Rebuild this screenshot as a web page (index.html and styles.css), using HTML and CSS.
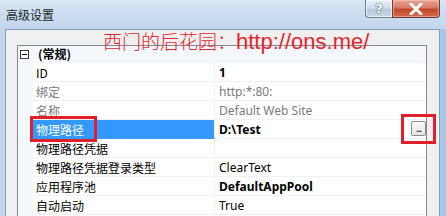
FILE: index.html
```html
<!DOCTYPE html>
<html lang="zh-CN">
<head>
<meta charset="utf-8">
<title>高级设置</title>
<link rel="stylesheet" href="styles.css">
</head>
<body>
<div class="window">
  <div class="titlebar">
    <span class="title">高级设置</span>
    <div class="caption-btns">
      <div class="btn-help">?</div>
      <div class="btn-close">
        <svg width="14" height="12" viewBox="0 0 14 12"><path d="M2 1 L12 11 M12 1 L2 11" stroke="#fff" stroke-width="3" stroke-linecap="round"/><path d="M2 1 L12 11 M12 1 L2 11" stroke="#fff" stroke-width="1.6"/></svg>
      </div>
    </div>
  </div>
  <div class="frame">
    <div class="client">
      <div class="grid">
        <div class="cat-row">
          <span class="toggle"></span>
          <span class="cat-name">(常规)</span>
        </div>
        <div class="row"><div class="gutter"></div><div class="name">ID</div><div class="value bold">1</div></div>
        <div class="row"><div class="gutter"></div><div class="name ro">绑定</div><div class="value ro">http:*:80:</div></div>
        <div class="row"><div class="gutter"></div><div class="name ro">名称</div><div class="value ro">Default Web Site</div></div>
        <div class="row"><div class="gutter"></div><div class="name sel">物理路径</div><div class="value bold">D:\Test<span class="ellipsis">...</span></div></div>
        <div class="row"><div class="gutter"></div><div class="name">物理路径凭据</div><div class="value"></div></div>
        <div class="row"><div class="gutter"></div><div class="name">物理路径凭据登录类型</div><div class="value">ClearText</div></div>
        <div class="row"><div class="gutter"></div><div class="name">应用程序池</div><div class="value bold">DefaultAppPool</div></div>
        <div class="row"><div class="gutter"></div><div class="name">自动启动</div><div class="value">True</div></div>
        <div class="row"><div class="gutter"></div><div class="name"></div><div class="value"></div></div>
      </div>
    </div>
  </div>
  <div class="watermark"><span class="wm-cjk">西门的后花园：</span><span class="wm-url">http://ons.me/</span></div>
  <div class="mark mark-name"></div>
  <div class="mark mark-btn"></div>
</div>
</body>
</html>
```
FILE: styles.css
```css
html, body {
  margin: 0;
  padding: 0;
}
body {
  width: 446px;
  height: 216px;
  overflow: hidden;
  font-family: "Noto Sans", "Noto Sans CJK SC", sans-serif;
  font-size: 12px;
  color: #000;
}
.window {
  position: relative;
  width: 446px;
  height: 216px;
  overflow: hidden;
  background: #c5d8ee;
}
.titlebar {
  height: 29px;
  display: flex;
  align-items: flex-start;
  justify-content: space-between;
  background: linear-gradient(to bottom, #dae7f5 0%, #cadcf0 50%, #c2d6ed 100%);
}
.title {
  margin: 7px 0 0 6px;
  font-family: "Noto Sans CJK SC", sans-serif;
  font-size: 12px;
  line-height: 16px;
  color: #1e1e1e;
}
.caption-btns {
  display: flex;
  margin-right: 6px;
}
.btn-help {
  width: 26px;
  height: 17px;
  border: 1px solid #6f7f94;
  border-top: none;
  border-right: none;
  border-radius: 0 0 0 4px;
  background: linear-gradient(to bottom, #e7eef7 0%, #d3dfec 45%, #b9c9dc 55%, #c9d7e7 100%);
  color: #fff;
  font-family: "DejaVu Sans", sans-serif;
  font-weight: bold;
  font-size: 13px;
  line-height: 17px;
  text-align: center;
  text-shadow: 0 0 2px #3c4f66, 0 0 1px #3c4f66;
  box-shadow: inset 0 0 0 1px rgba(255,255,255,0.6);
}
.btn-close {
  width: 46px;
  height: 17px;
  border: 1px solid #6d3a33;
  border-top: none;
  border-radius: 0 0 4px 0;
  background: linear-gradient(to bottom, #e8a696 0%, #d77a66 45%, #c2452c 55%, #d26a4a 100%);
  display: flex;
  align-items: center;
  justify-content: center;
  box-shadow: inset 0 0 0 1px rgba(255,200,190,0.5);
}
.frame {
  padding: 0 6px 0 5px;
  background: linear-gradient(to right, #c3d5ea 0%, #c9daee 90%, #a9c4e4 100%);
}
.client {
  border: 1px solid #8b9db2;
  border-bottom: none;
  background: #f0f0f0;
  padding: 15px 12px 0 11px;
  height: 200px;
}
.grid {
  border: 1px solid #828790;
  border-bottom: none;
  background: #fff;
  height: 200px;
}
.cat-row {
  height: 16px;
  border-bottom: 1px solid #f1f4f9;
  background: #f4f7fc;
  display: flex;
  align-items: center;
}
.toggle {
  position: relative;
  box-sizing: border-box;
  width: 9px;
  height: 9px;
  margin-left: 2px;
  border: 1px solid #3a3a3a;
  background: #fff;
}
.toggle::after {
  content: "";
  position: absolute;
  left: 1px;
  right: 1px;
  top: 3px;
  height: 1px;
  background: #000;
}
.cat-name {
  margin-left: 9px;
  font-weight: bold;
  font-family: "Noto Sans CJK SC", sans-serif;
  line-height: 16px;
}
.row {
  display: flex;
  height: 19px;
}
.gutter {
  width: 15px;
  flex: none;
  background: #f4f7fc;
}
.name {
  width: 178px;
  flex: none;
  padding-left: 3px;
  border-right: 1px solid #eef1f5;
  border-bottom: 1px solid #eef1f5;
  font-family: "Noto Sans CJK SC", sans-serif;
  line-height: 19px;
  white-space: nowrap;
}
.name.sel {
  background: #3399ff;
  color: #fff;
  border-bottom-color: #3399ff;
}
.value {
  flex: 1;
  position: relative;
  padding-left: 4px;
  border-bottom: 1px solid #eef1f5;
  line-height: 19px;
  white-space: nowrap;
}
.ro {
  color: #7a7a7a;
}
.bold {
  font-weight: bold;
}
.ellipsis {
  position: absolute;
  right: 0;
  top: 1px;
  box-sizing: border-box;
  width: 15px;
  height: 15px;
  border: 1px solid #8a8a8a;
  border-radius: 2px;
  background: linear-gradient(to bottom, #fafafa, #e4e4e4);
  font-weight: normal;
  font-size: 10px;
  line-height: 13px;
  text-align: center;
  color: #000;
  letter-spacing: -1px;
}
.watermark {
  position: absolute;
  left: 103px;
  top: 28px;
  color: #e3262c;
  white-space: nowrap;
  line-height: 26px;
}
.wm-cjk {
  font-family: "Noto Sans CJK SC", sans-serif;
  font-weight: 300;
  font-size: 19px;
}
.wm-url {
  font-family: "Liberation Sans", sans-serif;
  font-size: 22px;
}
.mark {
  position: absolute;
  box-sizing: border-box;
  border: 3px solid #e0202a;
}
.mark-name {
  left: 30px;
  top: 116px;
  width: 67px;
  height: 26px;
}
.mark-btn {
  left: 401px;
  top: 114px;
  width: 35px;
  height: 30px;
}
```
